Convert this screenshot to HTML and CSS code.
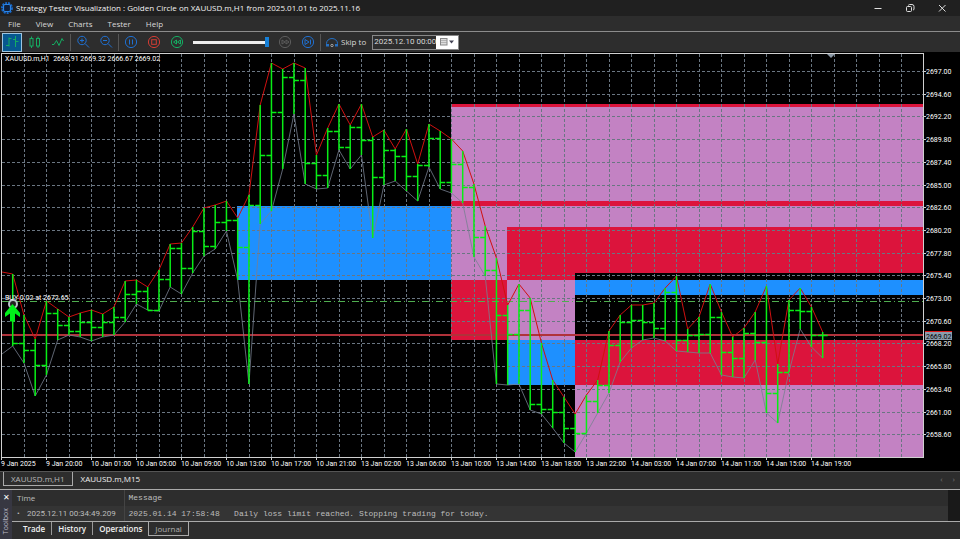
FILE: index.html
```
<!DOCTYPE html>
<html lang="en">
<head>
  <meta charset="UTF-8" />
  <meta name="viewport" content="width=device-width, initial-scale=1.0" />
  <title>Strategy Tester Visualization</title>
  <link rel="stylesheet" href="styles.css">
</head>
<body>
  <header class="titlebar">
    <svg class="app-icon" width="12" height="12" viewBox="0 0 12 12">
      <circle cx="6" cy="6" r="5" fill="none" stroke="#1565c8" stroke-width="2" stroke-dasharray="2 1"/>
      <rect x="2.5" y="2.5" width="7" height="7" rx="1.5" fill="#10203c" stroke="#2a86e8" stroke-width="1.2"/>
    </svg>
    <h1>Strategy Tester Visualization : Golden Circle on XAUUSD.m,H1 from 2025.01.01 to 2025.11.16</h1>
    <div class="window-buttons">
      <button aria-label="Minimize"><svg width="10" height="10" viewBox="0 0 10 10"><path d="M1.5 5.5h7"/></svg></button>
      <button aria-label="Restore"><svg width="10" height="10" viewBox="0 0 10 10"><rect x="1.5" y="3.5" width="5" height="5" rx="1"/><path d="M3.5 2.5q0-1 1-1h2.500q2 0 2 2v2.500q0 1-1 1"/></svg></button>
      <button aria-label="Close"><svg width="10" height="10" viewBox="0 0 10 10"><path d="M2 2l6.500 6.500M8.500 2L2 8.500"/></svg></button>
    </div>
  </header>

  <nav class="menu">
    <button>File</button>
    <button>View</button>
    <button>Charts</button>
    <button>Tester</button>
    <button>Help</button>
  </nav>

  <div class="toolbar">
    <button class="tool green active" aria-label="Bar chart"><svg width="16" height="16" viewBox="0 0 16 16"><path d="M2 11.500h3M5 3.500v9M5 4.500h2.500M9 5.500h2.500M11.500 2v11M11.500 7.500h3"/></svg></button>
    <button class="tool green" aria-label="Candles"><svg width="16" height="16" viewBox="0 0 16 16"><rect x="3" y="4.500" width="3" height="7.500"/><rect x="9.500" y="4.500" width="3" height="7.500"/><path d="M4.500 2.500v2M4.500 12v2M11 2.500v2M11 12v2"/></svg></button>
    <button class="tool green" aria-label="Line chart"><svg width="16" height="16" viewBox="0 0 16 16"><path d="M2 10.500h2l2.500-4 2.500 5 3-7 1.500 2.500"/></svg></button>
    <span class="sep"></span>
    <button class="tool blue" aria-label="Zoom in"><svg width="16" height="16" viewBox="0 0 16 16"><circle cx="7" cy="6.500" r="4.200"/><path d="M10 9.500l4 4M5 6.500h4M7 4.500v4"/></svg></button>
    <button class="tool blue" aria-label="Zoom out"><svg width="16" height="16" viewBox="0 0 16 16"><circle cx="7" cy="6.500" r="4.200"/><path d="M10 9.500l4 4M5 6.500h4"/></svg></button>
    <span class="sep"></span>
    <button class="tool blue" aria-label="Pause"><svg width="16" height="16" viewBox="0 0 16 16"><circle cx="8" cy="8" r="5.600"/><path d="M6.500 5.500v5M9.500 5.500v5"/></svg></button>
    <button class="tool red" aria-label="Stop"><svg width="16" height="16" viewBox="0 0 16 16"><circle cx="8" cy="8" r="5.600"/><rect x="5.700" y="5.700" width="4.600" height="4.600"/></svg></button>
    <button class="tool green" aria-label="Slower"><svg width="16" height="16" viewBox="0 0 16 16"><circle cx="8" cy="8" r="5.600"/><path d="M7.500 6v4l-3-2zM11.500 6v4l-3-2z"/></svg></button>
    <input class="speed" type="range" min="0" max="100" value="100" aria-label="Speed">
    <button class="tool off" aria-label="Faster"><svg width="16" height="16" viewBox="0 0 16 16"><circle cx="8" cy="8" r="5.600"/><path d="M5 6v4l3-2zM9 6v4l3-2z"/></svg></button>
    <button class="tool blue" aria-label="Next bar"><svg width="16" height="16" viewBox="0 0 16 16"><circle cx="8" cy="8" r="5.600"/><path d="M5 5.500v5l4-2.500zM10.500 5.500v5"/></svg></button>
    <span class="sep"></span>
    <button class="skip">
      <svg width="14" height="14" viewBox="0 0 14 14"><path d="M1.500 9.500v-1a5.500 5 0 0 1 11 0v1" fill="none" stroke="#2470c4"/><path d="M1 9h3v2.500H1zM10 9h3v2.500h-3z" fill="#2470c4"/><circle cx="7" cy="10.500" r="1.200" fill="none" stroke="#bbb" stroke-width=".8"/></svg>
      Skip to
    </button>
    <div class="date">
      <input type="text" value="2025.12.10 00:00" aria-label="Skip to date">
      <button aria-label="Pick date">
        <svg width="16" height="10" viewBox="0 0 16 10"><rect x="1.500" y="1.500" width="6.500" height="6.500" fill="#ddd" stroke="#888"/><path d="M2 3.500h6M2 5.500h6" stroke="#999" stroke-width=".6"/><path d="M10 3.500h5l-2.500 3z" fill="#445"/></svg>
      </button>
    </div>
  </div>

  <main>
    <svg class="chart" id="chart" viewBox="0 0 960 419" role="img" aria-label="XAUUSD.m,H1 chart">
      <g id="zones"></g>
      <g id="grid"></g>
      <path class="price-line" d="M2 283H923"/>
      <path class="buy-line" d="M2 249.500H923"/>
      <path class="line" id="lows"/>
      <path class="line" id="highs"/>
      <path class="line" id="bars"/>
      <path class="line" id="ticks"/>
      <circle cx="13" cy="252" r="4" fill="#222" stroke="#b8c0c8" stroke-width="2"/>
      <path d="M12.500 252l7.500 9v4l-5-3.500v8h-5v-8l-5 3.500v-4z" fill="#00f21a"/>
      <path d="M827 2h8l-4 4z" fill="#8b98a5"/>
      <path class="line frame" d="M1.500 405V1.500H923.500V405.500H1"/>
      <text x="5" y="9">XAUUSD.m,H1&#160; 2668.91 2669.32 2666.67 2669.02</text>
      <text x="5" y="248">BUY 0.02 at 2672.65</text>
      <g id="axis"></g>
      <rect x="925" y="279" width="27" height="9" fill="#8c9cac"/>
      <path d="M925 279.500h27" stroke="#e01818"/>
      <text class="now" x="926" y="287">2669.02</text>
    </svg>
  </main>

  <div class="chart-tabs">
    <button class="selected">XAUUSD.m,H1</button>
    <button>XAUUSD.m,M15</button>
    <div class="arrows">
      <button aria-label="Scroll left">‹</button>
      <button aria-label="Scroll right">›</button>
    </div>
  </div>

  <section class="toolbox">
    <div class="rail">
      <button aria-label="Close toolbox">✕</button>
      <span>Toolbox</span>
    </div>
    <div class="panel">
      <div class="log">
        <table>
          <thead>
            <tr><th class="time">Time</th><th class="message">Message</th></tr>
          </thead>
          <tbody>
            <tr><td class="time"><i>•</i>2025.12.11 00:34:49.209</td><td class="message">2025.01.14 17:58:48 &#160; Daily loss limit reached. Stopping trading for today.</td></tr>
          </tbody>
        </table>
        <div class="scroll"></div>
      </div>
      <div class="tabs">
        <button>Trade</button>
        <button>History</button>
        <button>Operations</button>
        <button class="selected">Journal</button>
      </div>
    </div>
  </section>

  <script src="chart.js"></script>
</body>
</html>
```
FILE: styles.css
```
* {
  box-sizing: border-box;
}

html, body {
  margin: 0;
  padding: 0;
}

body {
  display: flex;
  flex-direction: column;
  min-height: 100vh;
  background-color: #2d2d2d;
  color: #d8d8d8;
  font-family: "Open Sans", "Noto Sans", sans-serif;
  font-size: 8px;
  line-height: 12px;
}

button, input {
  margin: 0;
  padding: 0;
  border: none;
  background: none;
  color: inherit;
  font: inherit;
}

svg {
  display: block;
}

/* title and menu */
.titlebar {
  display: flex;
  align-items: center;
  height: 16px;
  padding-left: 1px;
  gap: 3px;
  background-color: #202020;
}

.titlebar h1 {
  margin: 0;
  font-size: 8px;
  font-weight: 400;
  color: #f2f2f2;
  white-space: nowrap;
}

.window-buttons {
  display: flex;
  margin-left: auto;
  padding-right: 2px;
}

.window-buttons button {
  display: flex;
  justify-content: center;
  width: 32px;
}

.window-buttons svg {
  fill: none;
  stroke: #e0e0e0;
}

.menu {
  display: flex;
  gap: 15px;
  height: 16px;
  padding-left: 8px;
  border-bottom: 1px solid #8c8c8c;
}

/* toolbar */
.toolbar {
  display: flex;
  align-items: center;
  gap: 3px;
  height: 20px;
  padding-left: 2px;
}

.tool {
  display: flex;
  align-items: center;
  justify-content: center;
  width: 20px;
  height: 19px;
}

.tool.active {
  background-color: #07578f;
  border: 1px solid #9cc4e0;
}

.tool svg {
  flex: none;
  fill: none;
  stroke: currentColor;
}

.green { color: #14ad62; }
.blue { color: #1f70d2; }
.red { color: #d23c34; }
.off { color: #5c5c5c; }

.sep {
  width: 1px;
  height: 17px;
  margin: 0 -1px;
  background-color: #555;
}

.speed {
  appearance: none;
  width: 76px;
  height: 10px;
  margin: 0 3px;
}

.speed::-webkit-slider-runnable-track {
  height: 3px;
  background-color: #eee;
}

.speed::-webkit-slider-thumb {
  appearance: none;
  width: 4px;
  height: 10px;
  margin-top: -4px;
  background-color: #1580d8;
}

.skip {
  display: flex;
  align-items: center;
  gap: 2px;
  margin-left: 2px;
}

.date {
  display: flex;
  height: 15px;
  margin-left: 3px;
  border: 1px solid #888;
}

.date input {
  width: 63px;
  padding-left: 1px;
  font-family: Roboto, sans-serif;
}

.date button {
  display: flex;
  align-items: center;
  justify-content: center;
  width: 22px;
  background-color: #fff;
}

/* chart */
.chart {
  width: 100%;
  height: auto;
  background-color: #000;
}

.line {
  fill: none;
}

.chart text {
  fill: #fff;
  font-family: Roboto, "Noto Sans", sans-serif;
  font-size: 7px;
}

.chart text.now {
  fill: #000;
}

#grid path {
  stroke: #6a7682;
  stroke-dasharray: 3 2;
  shape-rendering: crispEdges;
}

#zones {
  shape-rendering: crispEdges;
}

.blue-zone { fill: #1e90ff; }
.red-zone { fill: #dc143c; }
.violet-zone { fill: #c382c3; }
.black-zone { fill: #000; }

#bars, #ticks {
  stroke: #08ee16;
  stroke-width: 1.5px;
}

#highs {
  stroke: #d01010;
}

#lows {
  stroke: #778090;
  stroke-width: 0.8px;
}

.price-line {
  stroke: #b0323a;
  stroke-width: 2px;
}

.buy-line {
  stroke: #4fae4f;
  stroke-dasharray: 7 3 1 3;
}

.frame, #axis path {
  stroke: #d0d0d0;
  shape-rendering: crispEdges;
}

/* chart tabs */
.chart-tabs {
  display: flex;
  align-items: flex-start;
  height: 19px;
  padding-left: 3px;
  border-top: 1px solid #555;
  border-bottom: 1px solid #aaa;
}

.chart-tabs button {
  height: 14px;
  padding: 0 8px;
  color: #f0f0f0;
}

.chart-tabs .selected {
  padding: 0 7px;
  border: 1px solid #aaa;
  border-top: none;
  color: #b8b8b8;
}

.arrows {
  display: flex;
  margin-left: auto;
}

.arrows button {
  padding: 0 5px;
  color: #777;
}

/* toolbox */
.toolbox {
  display: flex;
  flex: 1;
}

.rail {
  display: flex;
  flex-direction: column;
  align-items: center;
  gap: 5px;
  width: 12px;
  padding-top: 1px;
  background-color: #373742;
}

.rail button {
  color: #fff;
}

.rail span {
  writing-mode: vertical-rl;
  transform: rotate(180deg);
  font-size: 7px;
  color: #b8b8c4;
}

.panel {
  flex: 1;
}

.log {
  display: flex;
  border-bottom: 1px solid #aaa;
}

table {
  flex: 1;
  border-collapse: collapse;
  table-layout: fixed;
}

th, td {
  height: 16px;
  padding: 0 5px;
  font-weight: 400;
  text-align: left;
  color: #bdbdbd;
}

td {
  height: 15px;
  background-color: #343434;
}

.time {
  width: 112px;
  border-right: 1px solid #444;
  white-space: nowrap;
}

td.time {
  font-family: Roboto, sans-serif;
}

.message {
  padding-left: 4px;
  font-family: "Liberation Mono", monospace;
}

i {
  display: inline-block;
  width: 10px;
  font-style: normal;
}

.scroll {
  width: 12px;
  background-color: #191919;
}

.tabs {
  display: flex;
  align-items: flex-start;
  padding-left: 5px;
  font-weight: 600;
}

.tabs button {
  padding: 0 6px;
  line-height: 13px;
  color: #f0f0f0;
}

.tabs button + button {
  border-left: 1px solid #999;
}

.tabs .selected {
  height: 14px;
  border: 1px solid #aaa;
  border-top: none;
  font-weight: 400;
  color: #b0b0b0;
}
```
FILE: chart.js
```
// every bar: [high, low, close] as chart y
const bars = [
  [222, 294, 291], [263, 311, 298], [287, 344, 313], [249, 323, 261], [257, 288, 273],
  [265, 283, 279], [261, 285, 270], [258, 289, 275], [262, 285, 270], [255, 283, 265],
  [229, 270, 242], [228, 252, 239], [235, 258, 258], [218, 259, 227], [192, 235, 196],
  [191, 242, 216], [175, 221, 179], [156, 204, 194], [153, 197, 170], [149, 179, 168],
  [166, 228, 195], [143, 332, 153], [53, 172, 103], [11, 159, 60], [17, 117, 25],
  [11, 62, 28], [16, 132, 111], [103, 137, 123], [76, 136, 79], [52, 98, 95],
  [73, 117, 75], [52, 103, 88], [85, 186, 125], [78, 133, 98], [97, 129, 104],
  [77, 139, 124], [112, 149, 113], [72, 115, 86], [79, 137, 130], [87, 141, 112],
  [99, 151, 135], [132, 205, 185], [174, 224, 218], [206, 332, 263], [253, 333, 282],
  [232, 332, 258], [246, 358, 352], [291, 362, 357], [328, 376, 360], [345, 391, 376],
  [362, 400, 381], [343, 381, 349], [328, 361, 333], [279, 341, 293], [263, 310, 270],
  [253, 296, 268], [253, 288, 270], [251, 286, 276], [236, 289, 240], [224, 299, 288],
  [277, 300, 283], [265, 301, 282], [232, 301, 265], [260, 323, 300], [285, 325, 306],
  [276, 326, 281], [260, 308, 290], [234, 361, 341], [312, 371, 320], [248, 320, 258],
  [236, 277, 259], [255, 295, 283], [280, 306, 283]
];

// [color, left, top, right, bottom]
const zones = [
  ['blue', 237, 154, 451, 228],
  ['violet', 451, 52, 923, 228],
  ['red', 451, 52, 923, 55],
  ['red', 451, 149, 923, 154],
  ['red', 451, 228, 507, 288],
  ['red', 507, 175, 923, 228],
  ['violet', 507, 228, 575, 288],
  ['blue', 507, 288, 575, 333],
  ['black', 575, 221, 923, 288],
  ['blue', 575, 228, 923, 243],
  ['red', 575, 288, 923, 333],
  ['violet', 575, 333, 923, 405]
];

const times = [
  '9 Jan 2025', '9 Jan 20:00', '10 Jan 01:00', '10 Jan 05:00', '10 Jan 09:00',
  '10 Jan 13:00', '10 Jan 17:00', '10 Jan 21:00', '13 Jan 02:00', '13 Jan 06:00',
  '13 Jan 10:00', '13 Jan 14:00', '13 Jan 18:00', '13 Jan 22:00', '14 Jan 03:00',
  '14 Jan 07:00', '14 Jan 11:00', '14 Jan 15:00', '14 Jan 19:00'
];

const step = 11.25;
const barX = i => 12.7 + i * step;
const byId = id => document.getElementById(id);

byId('zones').innerHTML = zones.map(([color, l, t, r, b]) =>
  `<rect class="${color}-zone" x="${l}" y="${t}" width="${r - l}" height="${b - t}"/>`).join('');

// grid
let grid = '';
for (let x = 24; x < 923; x += step * 2) {
  grid += `<path d="M${Math.floor(x) + 0.5} 2V405"/>`;
}
let axis = '';
for (let i = 0; i < 17; i++) {
  const y = Math.round(19 + i * 22.7);
  grid += `<path d="M2 ${y + 0.5}H923"/>`;
  axis += `<path d="M923 ${y + 0.5}h3"/>`;
  axis += `<text x="926" y="${y + 3}">${(2697 - i * 2.4).toFixed(2)}</text>`;
}
times.forEach((time, i) => {
  const x = Math.floor(1.5 + i * step * 4);
  axis += `<path d="M${x + 0.5} 405v3"/><text x="${x}" y="414">${time}</text>`;
});
byId('grid').innerHTML = grid;
byId('axis').innerHTML = axis;

// price bars with the high and low envelopes
byId('highs').setAttribute('d', 'M2 220L' + bars.map((b, i) => `${barX(i)} ${b[0]}`).join('L'));
byId('lows').setAttribute('d', 'M2 302L' + bars.map((b, i) => `${barX(i)} ${b[1]}`).join('L'));
byId('bars').setAttribute('d', bars.map((b, i) => `M${barX(i)} ${b[0]}V${b[1]}`).join(''));
byId('ticks').setAttribute('d', bars.map((b, i) => {
  const x = barX(i);
  const open = i ? `M${x - 5} ${bars[i - 1][2] + 0.5}h5` : '';
  return `${open}M${x} ${b[2] + 0.5}h5`;
}).join(''));
```
